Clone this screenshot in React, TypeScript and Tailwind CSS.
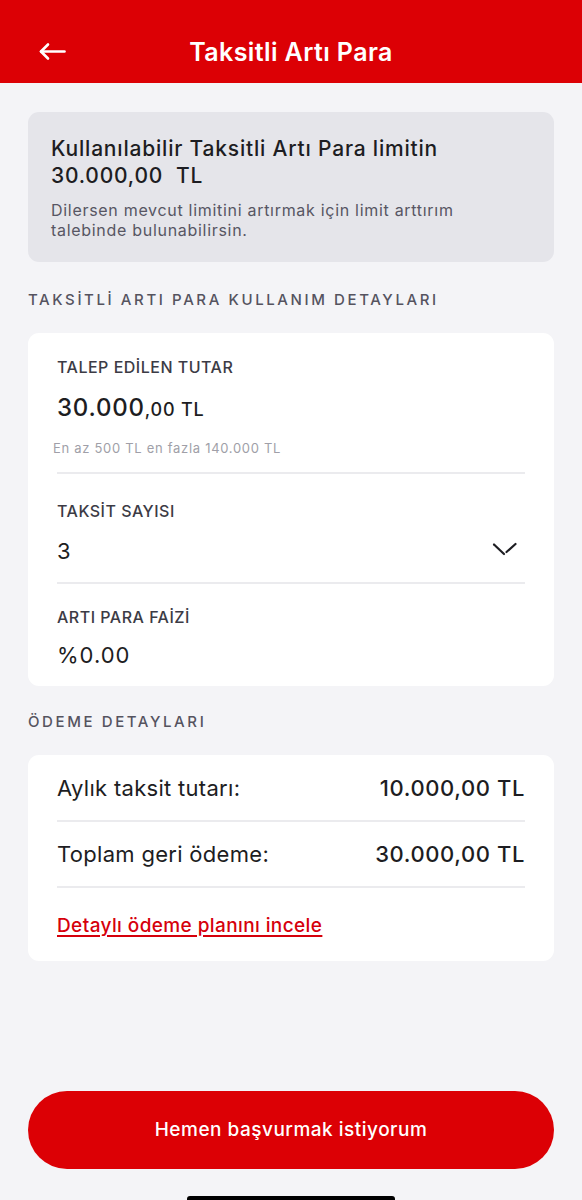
import React from "react";

const font = { fontFamily: "Inter, 'Open Sans', sans-serif" };

function Divider() {
  return <div className="h-[2px] bg-[#ebebee]" />;
}

export default function App() {
  return (
    <div className="min-h-[1200px] h-[1200px] w-[582px] bg-[#f4f4f7] flex flex-col overflow-hidden text-[#1d1d22]" style={font}>
      <header className="h-[83px] bg-[#dc0005] pt-[30px] shrink-0">
        <div className="relative h-[44px] flex items-center justify-center">
          <svg className="absolute left-[38px] top-[12px]" width="28" height="20" viewBox="0 0 28 20" fill="none">
            <path d="M3 9.5H26.5" stroke="white" strokeWidth="2.6" strokeLinecap="round" />
            <path d="M10 2.5L3 9.5L10 16.5" stroke="white" strokeWidth="2.6" strokeLinecap="round" strokeLinejoin="round" />
          </svg>
          <h1 className="text-white text-[25px] font-semibold leading-[30px] tracking-[0.4px]">Taksitli Artı Para</h1>
        </div>
      </header>

      <main className="px-[28px] flex flex-col">
        <section className="mt-[29px] bg-[#e5e5ea] rounded-[11px] pt-[23px] pb-[22px] px-[23px]">
          <p className="text-[21px] leading-[27px] font-medium tracking-[0.8px] text-[#1d1d22]">
            Kullanılabilir Taksitli Artı Para limitin
            <br />
            30.000,00&nbsp;&nbsp;TL
          </p>
          <p className="mt-[11px] text-[16px] leading-[20px] tracking-[0.7px] text-[#575663]">
            Dilersen mevcut limitini artırmak için limit arttırım
            <br />
            talebinde bulunabilirsin.
          </p>
        </section>

        <h2 className="mt-[28px] text-[15px] leading-[20px] font-medium tracking-[2.6px] text-[#55535f]">
          TAKSİTLİ ARTI PARA KULLANIM DETAYLARI
        </h2>

        <section className="mt-[23px] bg-white rounded-[11px] px-[29px] pt-[24px] pb-[17px]">
          <div className="text-[16px] leading-[20px] font-medium tracking-[0.5px] text-[#3c3b45]">TALEP EDİLEN TUTAR</div>
          <div className="mt-[16px] h-[30px] flex items-baseline font-medium leading-[30px] tracking-[0.8px]">
            <span className="text-[24px]">30.000</span>
            <span className="text-[18px]">,00 TL</span>
          </div>
          <div className="mt-[17px] ml-[-4px] text-[13px] leading-[16px] tracking-[0.7px] text-[#a09fa8]">En az 500 TL en fazla 140.000 TL</div>
          <div className="mt-[16px]">
            <Divider />
          </div>
          <div className="mt-[27px] text-[16px] leading-[20px] font-medium tracking-[0.5px] text-[#3c3b45]">TAKSİT SAYISI</div>
          <div className="mt-[16px] flex items-center justify-between h-[28px]">
            <span className="text-[22px] leading-[28px]">3</span>
            <svg className="mr-[7px] -mt-[4px]" width="26" height="14" viewBox="0 0 26 14" fill="none">
              <path d="M2 2.5L12 12" stroke="#1d1d22" strokeWidth="2.2" strokeLinecap="round" />
              <path d="M14.5 10L23.5 2" stroke="#1d1d22" strokeWidth="2.2" strokeLinecap="round" />
            </svg>
          </div>
          <div className="mt-[17px]">
            <Divider />
          </div>
          <div className="mt-[23px] text-[16px] leading-[20px] font-medium tracking-[0.5px] text-[#3c3b45]">ARTI PARA FAİZİ</div>
          <div className="mt-[14px] text-[22px] leading-[28px] tracking-[1px]">%0.00</div>
        </section>

        <h2 className="mt-[26px] text-[15px] leading-[20px] font-medium tracking-[2.6px] text-[#55535f]">
          ÖDEME DETAYLARI
        </h2>

        <section className="mt-[23px] bg-white rounded-[11px] px-[29px] pt-[19px] pb-[23px]">
          <div className="flex justify-between items-center h-[28px] text-[22px] leading-[28px] tracking-[0.3px]">
            <span>Aylık taksit tutarı:</span>
            <span className="font-medium tracking-[0.6px]">10.000,00 TL</span>
          </div>
          <div className="mt-[18px]">
            <Divider />
          </div>
          <div className="mt-[18px] flex justify-between items-center h-[28px] text-[22px] leading-[28px] tracking-[0.3px]">
            <span>Toplam geri ödeme:</span>
            <span className="font-medium tracking-[0.6px]">30.000,00 TL</span>
          </div>
          <div className="mt-[18px]">
            <Divider />
          </div>
          <a className="mt-[26px] block text-[19px] leading-[24px] font-medium tracking-[0.4px] text-[#d6000b] underline underline-offset-[3px] decoration-[2px]">
            Detaylı ödeme planını incele
          </a>
        </section>
      </main>

      <div className="flex-1" />

      <div className="px-[28px]">
        <button className="w-full h-[78px] rounded-full bg-[#dc0005] text-white text-[19px] font-medium tracking-[0.5px]">
          Hemen başvurmak istiyorum
        </button>
      </div>
      <div className="mt-[27px] ml-[187px] w-[208px] h-[4px] bg-black rounded-t-[3px] shrink-0" />
    </div>
  );
}
